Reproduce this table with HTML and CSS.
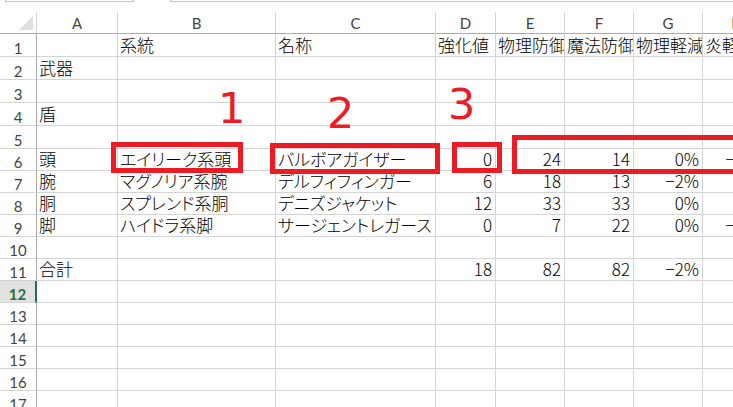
FILE: index.html
```html
<!DOCTYPE html>
<html lang="ja">
<head>
<meta charset="utf-8">
<title>Sheet</title>
<link rel="stylesheet" href="styles.css">
</head>
<body>
<div class="topbar"><div class="namebox"></div><div class="fxbar"></div></div>
<div class="sheet">
  <div class="row hdr">
    <div class="corner"><svg width="14" height="14" viewBox="0 0 14 14"><polygon points="14,0 14,14 0,14" fill="#dfdfdf"/></svg></div>
    <div class="ch">A</div><div class="ch">B</div><div class="ch">C</div><div class="ch">D</div><div class="ch">E</div><div class="ch">F</div><div class="ch">G</div><div class="ch">H</div>
  </div>
  <div class="row tall">
    <div class="rh">1</div><div class="c"></div><div class="c">系統</div><div class="c">名称</div><div class="c">強化値</div><div class="c">物理防御</div><div class="c">魔法防御</div><div class="c">物理軽減</div><div class="c">炎軽減</div>
  </div>
  <div class="row tall">
    <div class="rh">2</div><div class="c">武器</div><div class="c"></div><div class="c"></div><div class="c"></div><div class="c"></div><div class="c"></div><div class="c"></div><div class="c"></div>
  </div>
  <div class="row tall">
    <div class="rh">3</div><div class="c"></div><div class="c"></div><div class="c"></div><div class="c"></div><div class="c"></div><div class="c"></div><div class="c"></div><div class="c"></div>
  </div>
  <div class="row tall">
    <div class="rh">4</div><div class="c">盾</div><div class="c"></div><div class="c"></div><div class="c"></div><div class="c"></div><div class="c"></div><div class="c"></div><div class="c"></div>
  </div>
  <div class="row tall">
    <div class="rh">5</div><div class="c"></div><div class="c"></div><div class="c"></div><div class="c"></div><div class="c"></div><div class="c"></div><div class="c"></div><div class="c"></div>
  </div>
  <div class="row">
    <div class="rh">6</div><div class="c">頭</div><div class="c">エイリーク系頭</div><div class="c">バルボアガイザー</div><div class="c n">0</div><div class="c n">24</div><div class="c n">14</div><div class="c n">0%</div><div class="c n">−10%</div>
  </div>
  <div class="row">
    <div class="rh">7</div><div class="c">腕</div><div class="c">マグノリア系腕</div><div class="c">デルフィフィンガー</div><div class="c n">6</div><div class="c n">18</div><div class="c n">13</div><div class="c n">−2%</div><div class="c"></div>
  </div>
  <div class="row">
    <div class="rh">8</div><div class="c">胴</div><div class="c">スプレンド系胴</div><div class="c">デニズジャケット</div><div class="c n">12</div><div class="c n">33</div><div class="c n">33</div><div class="c n">0%</div><div class="c"></div>
  </div>
  <div class="row">
    <div class="rh">9</div><div class="c">脚</div><div class="c">ハイドラ系脚</div><div class="c">サージェントレガース</div><div class="c n">0</div><div class="c n">7</div><div class="c n">22</div><div class="c n">0%</div><div class="c n">−10%</div>
  </div>
  <div class="row">
    <div class="rh">10</div><div class="c"></div><div class="c"></div><div class="c"></div><div class="c"></div><div class="c"></div><div class="c"></div><div class="c"></div><div class="c"></div>
  </div>
  <div class="row">
    <div class="rh">11</div><div class="c">合計</div><div class="c"></div><div class="c"></div><div class="c n">18</div><div class="c n">82</div><div class="c n">82</div><div class="c n">−2%</div><div class="c"></div>
  </div>
  <div class="row">
    <div class="rh sel">12</div><div class="c"></div><div class="c"></div><div class="c"></div><div class="c"></div><div class="c"></div><div class="c"></div><div class="c"></div><div class="c"></div>
  </div>
  <div class="row">
    <div class="rh">13</div><div class="c"></div><div class="c"></div><div class="c"></div><div class="c"></div><div class="c"></div><div class="c"></div><div class="c"></div><div class="c"></div>
  </div>
  <div class="row">
    <div class="rh">14</div><div class="c"></div><div class="c"></div><div class="c"></div><div class="c"></div><div class="c"></div><div class="c"></div><div class="c"></div><div class="c"></div>
  </div>
  <div class="row">
    <div class="rh">15</div><div class="c"></div><div class="c"></div><div class="c"></div><div class="c"></div><div class="c"></div><div class="c"></div><div class="c"></div><div class="c"></div>
  </div>
  <div class="row">
    <div class="rh">16</div><div class="c"></div><div class="c"></div><div class="c"></div><div class="c"></div><div class="c"></div><div class="c"></div><div class="c"></div><div class="c"></div>
  </div>
  <div class="row">
    <div class="rh">17</div><div class="c"></div><div class="c"></div><div class="c"></div><div class="c"></div><div class="c"></div><div class="c"></div><div class="c"></div><div class="c"></div>
  </div>
</div>

<div class="mark box1"></div>
<div class="mark box2"></div>
<div class="mark box3"></div>
<div class="mark box4"></div>
<span class="num num1">1</span>
<span class="num num2">2</span>
<span class="num num3">3</span>
</body>
</html>
```

FILE: styles.css
```css
html, body {
  margin: 0;
  padding: 0;
  overflow: hidden;
  background: #ffffff;
}
body {
  position: relative;
  width: 733px;
  height: 407px;
  font-family: "Noto Sans CJK JP", "Noto Sans", sans-serif;
  color: #000;
}

.topbar {
  height: 12px;
  display: flex;
  align-items: flex-start;
}
.namebox {
  margin-left: 5px;
  width: 127px;
  height: 1px;
  border-left: 1px solid #c6c6c6;
  border-right: 1px solid #c6c6c6;
  border-bottom: 1px solid #c6c6c6;
}
.fxbar {
  margin-left: 36px;
  flex: 1;
  height: 1px;
  border-left: 1px solid #c6c6c6;
  border-bottom: 1px solid #c6c6c6;
}

.sheet {
  width: 772px;
}
.row {
  display: grid;
  grid-template-columns: 37px 81px 158px 160px 60px 69px 69px 69px 69px;
  height: 22px;
}
.row.tall {
  height: 23px;
}
.row > div {
  box-sizing: border-box;
  border-right: 1px solid #d4d4d4;
  border-bottom: 1px solid #d4d4d4;
  overflow: hidden;
  white-space: nowrap;
}

.hdr > div {
  border-bottom-color: #ababab;
}
.corner {
  display: flex;
  justify-content: flex-end;
  align-items: flex-end;
  padding: 0 3px 3px 0;
}
.corner svg {
  display: block;
}
.ch {
  display: flex;
  align-items: center;
  justify-content: center;
  font-family: "Lato", "Liberation Sans", sans-serif;
  font-size: 15px;
  color: #444;
}

.rh {
  display: flex;
  align-items: flex-end;
  justify-content: center;
  font-family: "Lato", "Liberation Sans", sans-serif;
  font-size: 15px;
  line-height: 16px;
  color: #444;
}
.row > .rh {
  border-right-color: #ababab;
}
.row > .rh.sel {
  background: #e1e1e1;
  color: #217346;
  font-weight: bold;
  border-right: 2px solid #217346;
}

.c {
  display: flex;
  align-items: flex-end;
  padding: 0 3px 2px 2px;
  font-size: 17px;
  line-height: 18px;
  font-weight: 300;
  font-feature-settings: "palt";
}
.c.n {
  justify-content: flex-end;
}

.mark {
  position: absolute;
  box-sizing: border-box;
  border: 5px solid #ed1c24;
}
.box1 { left: 111px; top: 142px; width: 132px; height: 31px; }
.box2 { left: 270px; top: 143px; width: 170px; height: 31px; }
.box3 { left: 452px; top: 142px; width: 50px; height: 31px; }
.box4 { left: 512px; top: 135px; width: 260px; height: 39px; }

.num {
  position: absolute;
  font-family: "DejaVu Sans", sans-serif;
  font-size: 43px;
  line-height: 43px;
  color: #ed1c24;
}
.num1 { left: 218px; top: 87px; }
.num2 { left: 327px; top: 92px; }
.num3 { left: 448px; top: 83px; }
```
